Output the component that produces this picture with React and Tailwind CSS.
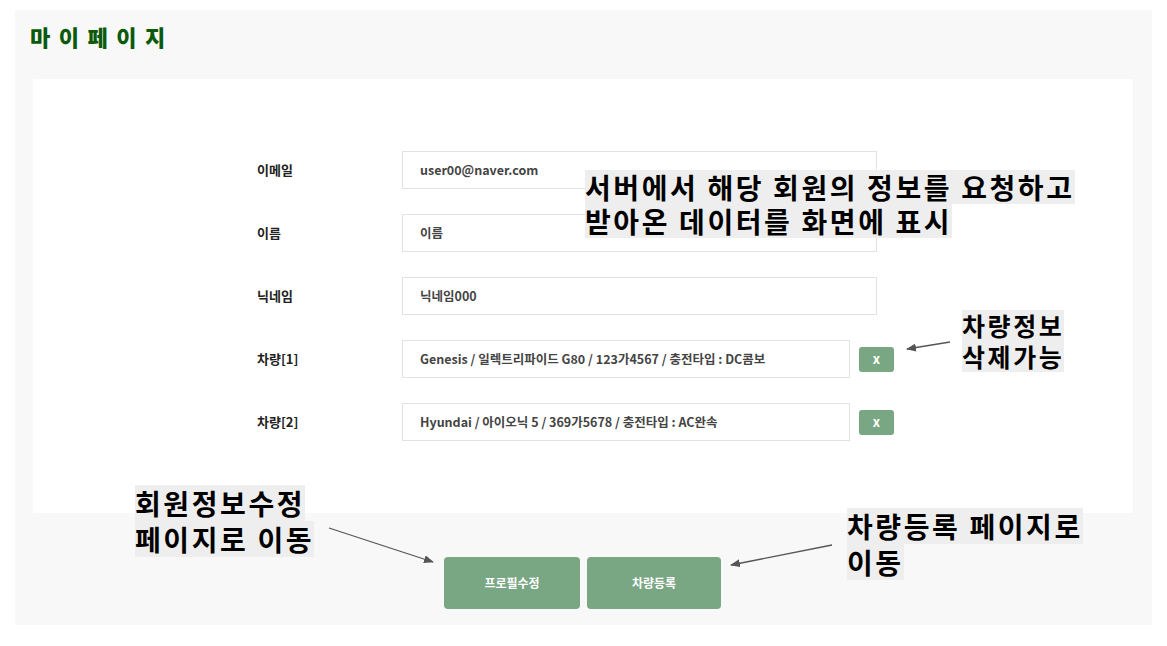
import React from 'react'

const FONT = { fontFamily: '"Noto Sans CJK KR", "Noto Sans", sans-serif' }

const Row = ({ label, value, removable }) => (
  <div className="flex items-center h-[38px]">
    <label className="w-[145px] text-[13px] font-bold text-[#222]">{label}</label>
    <div
      className={
        (removable ? 'w-[448px]' : 'w-[475px]') +
        ' h-[38px] border border-[#e2e2e2] bg-white flex items-center pl-[17px] text-[12.5px] font-bold text-[#444]'
      }
    >
      {value}
    </div>
    {removable && (
      <button className="ml-[9px] w-[35px] h-[25px] rounded-[3px] bg-[#79a683] text-white text-[13px] font-bold flex items-center justify-center">
        x
      </button>
    )}
  </div>
)

const Note = ({ lines, className, size, lh }) => (
  <div className={'absolute text-black font-bold ' + className}>
    {lines.map((l) => (
      <div
        key={l}
        className="w-fit bg-[#eeeeee] whitespace-nowrap tracking-[2.6px]"
        style={{ fontSize: size, lineHeight: lh + 'px', height: lh }}
      >
        {l}
      </div>
    ))}
  </div>
)

export default function App() {
  return (
    <div className="relative w-[1167px] h-[646px] bg-white pt-[10px] pl-[15px]" style={FONT}>
      <div className="w-[1137px] h-[615px] bg-[#f8f8f8] flex flex-col">
        {/* title */}
        <h1 className="h-[69px] pl-[15px] pt-[12px] text-[22px] font-black text-[#0b5a0b] leading-[28px] tracking-[1px] [word-spacing:1.5px]">
          마 이 페 이 지
        </h1>

        {/* card */}
        <div className="ml-[18px] w-[1100px] h-[434px] bg-white pt-[72px] pl-[224px] flex flex-col gap-[25px]">
          <Row label="이메일" value="user00@naver.com" />
          <Row label="이름" value="이름" />
          <Row label="닉네임" value="닉네임000" />
          <Row label="차량[1]" value="Genesis / 일렉트리파이드 G80 / 123가4567 / 충전타입 : DC콤보" removable />
          <Row label="차량[2]" value="Hyundai / 아이오닉 5 / 369가5678 / 충전타입 : AC완속" removable />
        </div>

        {/* buttons */}
        <div className="flex justify-center gap-[7px] mt-[44px] pr-[2px]">
          <button className="w-[136px] h-[52px] rounded-[4px] bg-[#79a683] text-white text-[12px] font-bold">
            프로필수정
          </button>
          <button className="w-[134px] h-[52px] rounded-[4px] bg-[#79a683] text-white text-[12px] font-bold">
            차량등록
          </button>
        </div>
      </div>

      {/* annotations */}
      <Note className="left-[585px] top-[170px]" size={28} lh={34} lines={['서버에서 해당 회원의 정보를 요청하고', '받아온 데이터를 화면에 표시']} />
      <Note className="left-[962px] top-[310px]" size={25} lh={31} lines={['차량정보', '삭제가능']} />
      <Note className="left-[135px] top-[485px]" size={28} lh={36} lines={['회원정보수정', '페이지로 이동']} />
      <Note className="left-[847px] top-[508px]" size={28} lh={36} lines={['차량등록 페이지로', '이동']} />

      <svg className="absolute inset-0 pointer-events-none" width="1167" height="646">
        <defs>
          <marker id="ah" markerWidth="10" markerHeight="8" refX="9" refY="4" orient="auto" markerUnits="userSpaceOnUse">
            <path d="M0,0 L10,4 L0,8 Z" fill="#555" />
          </marker>
        </defs>
        <line x1="950" y1="342" x2="907" y2="349" stroke="#555" strokeWidth="1.3" markerEnd="url(#ah)" />
        <line x1="329" y1="528" x2="433" y2="562" stroke="#555" strokeWidth="1.3" markerEnd="url(#ah)" />
        <line x1="832" y1="545" x2="731" y2="565" stroke="#555" strokeWidth="1.3" markerEnd="url(#ah)" />
      </svg>
    </div>
  )
}
